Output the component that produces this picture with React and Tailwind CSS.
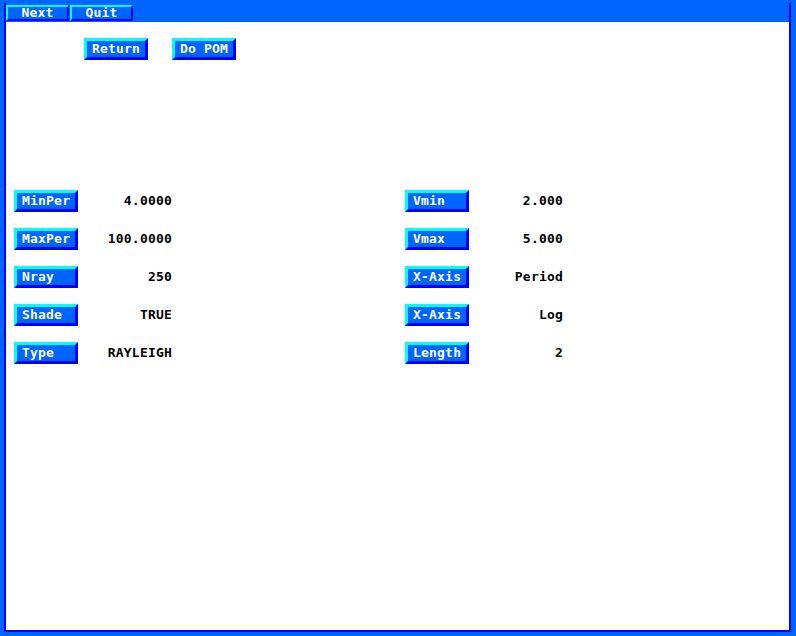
import React from 'react';

const font = { fontFamily: '"DejaVu Sans Mono", "Liberation Mono", monospace' };

function MenuButton({ label }) {
  return (
    <div className="w-[63px] h-[16px] flex items-center justify-center pb-[1px] border-2 border-t-[#00ffff] border-l-[#00ffff] border-b-[#0000ff] border-r-[#0000ff] bg-[#0064ff] text-white font-bold text-[13px] tracking-[0.2px] leading-none">
      {label}
    </div>
  );
}

function Button({ label, center }) {
  return (
    <div
      className={`w-[64px] h-[22px] flex items-center pb-[2px] border-[3px] border-t-[#00ffff] border-l-[#00ffff] border-b-[#0000ff] border-r-[#0000ff] bg-[#0064ff] text-white font-bold text-[13px] tracking-[0.2px] leading-none ${center ? 'justify-center' : 'pl-[5px]'}`}
    >
      {label}
    </div>
  );
}

function Field({ label, value }) {
  return (
    <div className="flex items-center h-[22px]">
      <Button label={label} />
      <div className="w-[94px] pb-[2px] text-right text-black font-bold text-[13px] tracking-[0.2px] leading-none">{value}</div>
    </div>
  );
}

const left = [
  ['MinPer', '4.0000'],
  ['MaxPer', '100.0000'],
  ['Nray', '250'],
  ['Shade', 'TRUE'],
  ['Type', 'RAYLEIGH'],
];

const right = [
  ['Vmin', '2.000'],
  ['Vmax', '5.000'],
  ['X-Axis', 'Period'],
  ['X-Axis', 'Log'],
  ['Length', '2'],
];

export default function App() {
  return (
    <div className="w-[796px] h-[636px] bg-[#0064ff] pt-[3px] pl-[4px] pr-[5px] pb-[4px]" style={font}>
      <div className="h-full flex flex-col border-l-2 border-r-2 border-b-2 border-[#0000ff]">
        {/* Menu bar */}
        <div className="h-[19px] flex gap-[1px] pt-[2px] bg-[#0064ff]">
          <MenuButton label="Next" />
          <MenuButton label="Quit" />
        </div>

        {/* Body */}
        <div className="flex-1 bg-white">
          <div className="flex gap-[24px] pl-[78px] pt-[16px]">
            <Button label="Return" center />
            <Button label="Do POM" center />
          </div>

          <div className="flex pl-[8px] pt-[130px]">
            <div className="w-[391px] flex flex-col gap-[16px]">
              {left.map(([l, v]) => (
                <Field key={l} label={l} value={v} />
              ))}
            </div>
            <div className="flex flex-col gap-[16px]">
              {right.map(([l, v], i) => (
                <Field key={i} label={l} value={v} />
              ))}
            </div>
          </div>
        </div>
      </div>
    </div>
  );
}
